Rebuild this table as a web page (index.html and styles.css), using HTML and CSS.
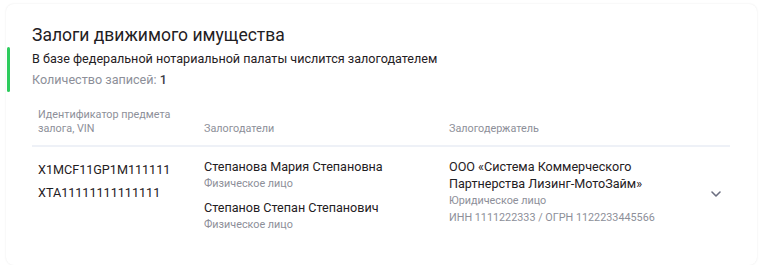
FILE: index.html
```html
<!DOCTYPE html>
<html lang="ru">
<head>
<meta charset="utf-8">
<link rel="stylesheet" href="styles.css">
</head>
<body>
<div class="card">
  <div class="head">
    <h2 class="title">Залоги движимого имущества</h2>
    <div class="sub">В базе федеральной нотариальной палаты числится залогодателем</div>
    <div class="count">Количество записей: <b>1</b></div>
  </div>
  <div class="table">
    <div class="thead">
      <div class="c1">Идентификатор предмета<br>залога, VIN</div>
      <div class="c2">Залогодатели</div>
      <div class="c3">Залогодержатель</div>
    </div>
    <div class="row">
      <div class="c1">
        <div class="vin">X1MCF11GP1M111111</div>
        <div class="vin">XTA11111111111111</div>
      </div>
      <div class="c2">
        <div class="person">
          <div class="name">Степанова Мария Степановна</div>
          <div class="meta">Физическое лицо</div>
        </div>
        <div class="person">
          <div class="name">Степанов Степан Степанович</div>
          <div class="meta">Физическое лицо</div>
        </div>
      </div>
      <div class="c3">
        <div class="name">ООО «Система Коммерческого<br>Партнерства Лизинг-МотоЗайм»</div>
        <div class="meta">Юридическое лицо</div>
        <div class="meta">ИНН 1111222333 / ОГРН 1122233445566</div>
      </div>
      <div class="chev">
        <svg width="12" height="8" viewBox="0 0 12 8"><path d="M2 2l4 4 4-4" fill="none" stroke="#6b6e80" stroke-width="1.6" stroke-linecap="round" stroke-linejoin="round"/></svg>
      </div>
    </div>
  </div>
</div>
</body>
</html>
```

FILE: styles.css
```css
* { box-sizing: border-box; }
body {
  margin: 0;
  background: #fff;
  font-family: Roboto, "Noto Sans", sans-serif;
  color: #1f2023;
}
.card {
  margin: 4px 13px 0 6px;
  height: 261px;
  border-radius: 8px;
  box-shadow: 0 0 2px rgba(0,0,0,0.10);
  padding: 20px 26px 0 26px;
  position: relative;
}
.head {
  position: relative;
}
.head::before {
  content: "";
  position: absolute;
  left: -25px;
  top: 23px;
  width: 3px;
  height: 45px;
  border-radius: 2px;
  background: #2ecc5e;
}
.title {
  margin: 0;
  font-size: 17.5px;
  font-weight: 400;
  line-height: 23px;
}
.sub {
  margin-top: 2px;
  font-size: 12.6px;
  line-height: 19px;
}
.count {
  margin-top: 2px;
  font-size: 12.6px;
  line-height: 19px;
  color: #8d8f99;
}
.count b { color: #3b3d45; font-weight: 500; }
.table {
  margin-top: 19px;
  width: 698px;
}
.thead {
  display: grid;
  grid-template-columns: 166px 245px 1fr;
  padding: 0 0 9px 6px;
  border-bottom: 2px solid #eef1f7;
  align-items: end;
  font-size: 10.8px;
  line-height: 14px;
  color: #8d8f99;
}
.row {
  display: grid;
  grid-template-columns: 166px 245px 1fr 20px;
  padding: 11px 0 0 6px;
}
.vin {
  font-size: 12.6px;
  line-height: 23px;
}
.name {
  font-size: 12.6px;
  line-height: 17px;
}
.meta {
  font-size: 10.8px;
  line-height: 17px;
  color: #8d8f99;
}
.person + .person { margin-top: 7px; }
.chev {
  display: flex;
  align-items: flex-start;
  justify-content: flex-end;
  padding-top: 32px;
  padding-right: 8px;
}
```
